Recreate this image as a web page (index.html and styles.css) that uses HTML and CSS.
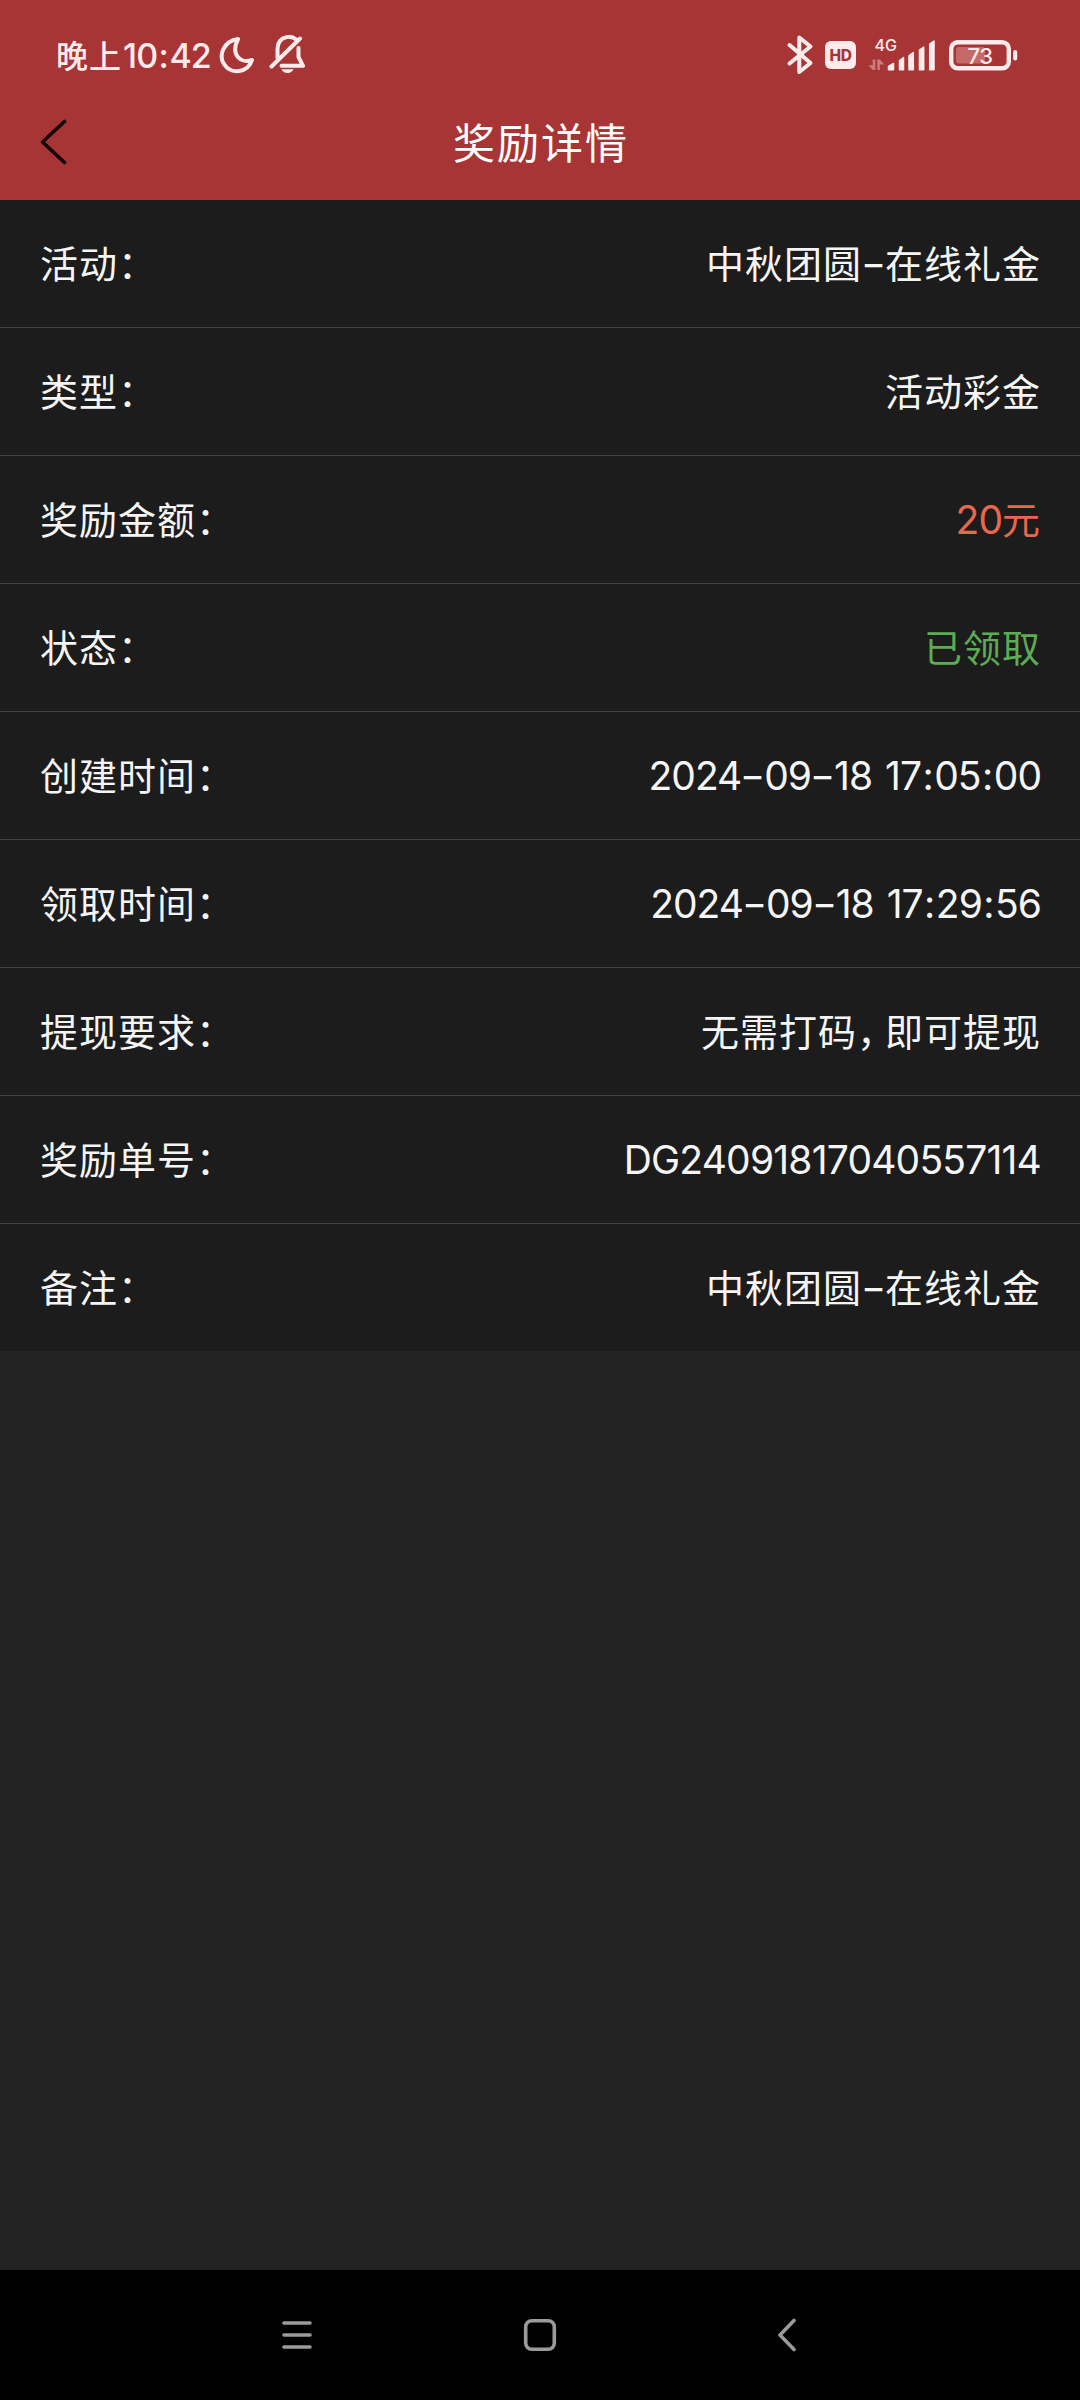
FILE: index.html
```html
<!DOCTYPE html>
<html lang="zh-CN">
<head>
<meta charset="utf-8">
<title>奖励详情</title>
<link rel="stylesheet" href="styles.css">
</head>
<body>
<div class="screen">
  <header class="header">
    <div class="status">
      <div class="status-left">
        <span class="clock">晚上<span class="clock-digits">10<span class="colon">:</span>42</span></span>
        <svg class="icon-moon" width="36" height="38" viewBox="219 36 36 38"><path d="M238 39C224 41 218 55 224 64C231 75 248 73 252 60C241 64 230 55 238 39Z"/></svg>
        <svg class="icon-bell" width="38" height="40" viewBox="269 36 38 40"><path d="M277.500 59V50C278 35 295 36 297 42M271.500 67.500L300 39.500M298.500 49V58L303 66.800H281.500"/><path class="solid" d="M281.500 70.300H293.500Q292 74 287.500 74Q283 74 281.500 70.300Z"/></svg>
      </div>
      <div class="status-right">
        <svg width="28" height="40" viewBox="786 35 28 40"><path class="bt" d="M789.500 45L810.500 63L799.300 72V37.500L810.500 46.500L789.500 63.500"/></svg>
        <span class="hd">HD</span>
        <svg class="icon-signal" width="70" height="40" viewBox="867 35 70 40">
          <text x="874.500" y="50.500">4G</text>
          <path class="dim" d="M872.700 59.500V70H875.300V59.500ZM872.700 70L868.300 65.200H872.700ZM877.300 70V59.500H879.900V70ZM879.900 59.500L884.300 64.500H879.900Z"/>
          <path class="bars" d="M888.500 66.500L893.500 63.500V69.700H888.500ZM899.500 60.500L903.500 57.500V69.700H899.500ZM909 55.500L913.300 52.500V69.700H909ZM919.500 50L923.700 47V69.700H919.500ZM929.700 44L934 41V69.700H929.700Z"/>
        </svg>
        <svg class="icon-battery" width="70" height="34" viewBox="948 38 70 34">
          <rect class="level" x="956" y="47" width="29" height="16.500" rx="3"/>
          <rect class="case" x="951.200" y="42.200" width="57.600" height="26.100" rx="6.500"/>
          <rect class="tip" x="1013.200" y="50" width="4" height="10.500" rx="2"/>
          <text x="967.500" y="63.500">73</text>
        </svg>
      </div>
    </div>
    <div class="titlebar">
      <svg class="back" width="28" height="48" viewBox="0 0 28 48"><path d="M24.500 3.500L2.500 24L24.500 44.500"/></svg>
      <h1 class="title">奖励详情</h1>
      <span class="balance"></span>
    </div>
  </header>
  <main class="list">
    <div class="row"><span class="label">活动：</span><span class="value">中秋团圆<span class="dash">-</span>在线礼金</span></div>
    <div class="row"><span class="label">类型：</span><span class="value">活动彩金</span></div>
    <div class="row"><span class="label">奖励金额：</span><span class="value amount"><span class="num">20</span>元</span></div>
    <div class="row"><span class="label">状态：</span><span class="value claimed">已领取</span></div>
    <div class="row"><span class="label">创建时间：</span><span class="value num">2024<span class="dash">-</span>09<span class="dash">-</span>18 17<span class="colon">:</span>05<span class="colon">:</span>00</span></div>
    <div class="row"><span class="label">领取时间：</span><span class="value num">2024<span class="dash">-</span>09<span class="dash">-</span>18 17<span class="colon">:</span>29<span class="colon">:</span>56</span></div>
    <div class="row"><span class="label">提现要求：</span><span class="value">无需打码<span class="comma">，</span>即可提现</span></div>
    <div class="row"><span class="label">奖励单号：</span><span class="value num serial">DG24091817040557114</span></div>
    <div class="row"><span class="label">备注：</span><span class="value">中秋团圆<span class="dash">-</span>在线礼金</span></div>
  </main>
  <nav class="navbar">
    <svg width="32" height="34" viewBox="0 0 32 34"><path d="M3 5H29M3 17H29M3 29H29"/></svg>
    <svg class="home" width="34" height="34" viewBox="0 0 34 34"><rect x="2.700" y="2.700" width="28.600" height="28.600" rx="6"/></svg>
    <svg width="20" height="34" viewBox="0 0 20 34"><path d="M17 2.500L3 17L17 31.500"/></svg>
  </nav>
</div>
</body>
</html>
```
FILE: styles.css
```css
* { box-sizing: border-box; }
body {
  margin: 0;
  background: #232323;
  color: #f5f5f5;
  font-family: "Noto Sans CJK SC", sans-serif;
}
svg { display: block; fill: none; stroke-linecap: round; stroke-linejoin: round; }
svg text { font-family: Inter, sans-serif; fill: #ffebeb; stroke: none; }
.screen { width: 1080px; height: 2400px; display: flex; flex-direction: column; }

.header { height: 200px; background: #a83535; display: flex; flex-direction: column; }
.status {
  height: 110px;
  padding: 0 62px 0 56px;
  display: flex;
  align-items: center;
  justify-content: space-between;
  color: #ffebeb;
}
.status-left, .status-right { display: flex; align-items: center; }
.clock {
  width: 163px;
  padding-bottom: 3px;
  font-size: 32px;
  font-weight: 500;
  letter-spacing: 1px;
  white-space: nowrap;
}
.clock-digits { font-family: Inter, sans-serif; font-size: 34px; letter-spacing: -1px; margin-left: 1px; }
.colon { margin: 0 1.500px; }
.icon-moon, .icon-bell { stroke: #ffebeb; stroke-width: 4; }
.icon-bell { margin-left: 14px; }
.icon-bell .solid { fill: #ffebeb; stroke: none; }
.bt { stroke: #ffebeb; stroke-width: 4; }
.hd {
  width: 31px;
  height: 28px;
  margin-left: 11px;
  border-radius: 6px;
  background: #ffebeb;
  color: #a83535;
  font: 800 15.500px/29px Inter, sans-serif;
  text-align: center;
  letter-spacing: -0.5px;
}
.icon-signal { margin-left: 11px; }
.icon-signal text { font-size: 16px; font-weight: 500; }
.icon-signal .dim { fill: #cb7d7d; }
.icon-signal .bars { fill: #ffebeb; stroke: #ffebeb; stroke-width: 1.500; }
.icon-battery { margin-left: 11px; }
.icon-battery .case { stroke: #ffebeb; stroke-width: 4.400; }
.icon-battery .level { fill: #c46868; }
.icon-battery .tip { fill: #ffebeb; }
.icon-battery text { font-size: 22px; font-weight: 500; letter-spacing: -0.5px; }

.titlebar { height: 90px; padding: 0 40px; display: flex; justify-content: space-between; }
.back { margin-top: 8px; stroke: #120000; stroke-width: 3.600; }
.title { margin: 0; font-size: 42px; font-weight: 400; line-height: 61px; letter-spacing: 2px; color: #fff; }
.balance { width: 26px; }

.list { height: 1151px; background: #1c1c1c; }
.row {
  height: 128px;
  padding: 0 39px 0 40px;
  border-bottom: 1px solid #424242;
  display: flex;
  align-items: center;
  justify-content: space-between;
  font-size: 38px;
  letter-spacing: 1px;
  white-space: nowrap;
}
.row:last-child { height: 127px; border-bottom: 0; }
.label, .value { padding-bottom: 4px; }
.num { font-family: Inter, sans-serif; font-size: 39px; letter-spacing: -1px; }
.value.num { padding-bottom: 0; word-spacing: 3px; }
.value.serial { letter-spacing: -0.800px; }
.dash {
  display: inline-block;
  width: 23px;
  font-family: Inter, sans-serif;
  font-size: 39px;
  line-height: 1;
  text-align: center;
  letter-spacing: 0;
  transform: scaleX(1.400);
}
.comma { font-feature-settings: "halt"; margin-right: 8px; }
.amount { color: #e8674d; }
.claimed { color: #5cab55; }

.navbar {
  height: 130px;
  margin-top: auto;
  padding: 0 283px 0 281px;
  background: #000;
  display: flex;
  align-items: center;
  justify-content: space-between;
  stroke: #9b9b9b;
  stroke-width: 3.600;
}
.home { margin-right: 11px; }
```
